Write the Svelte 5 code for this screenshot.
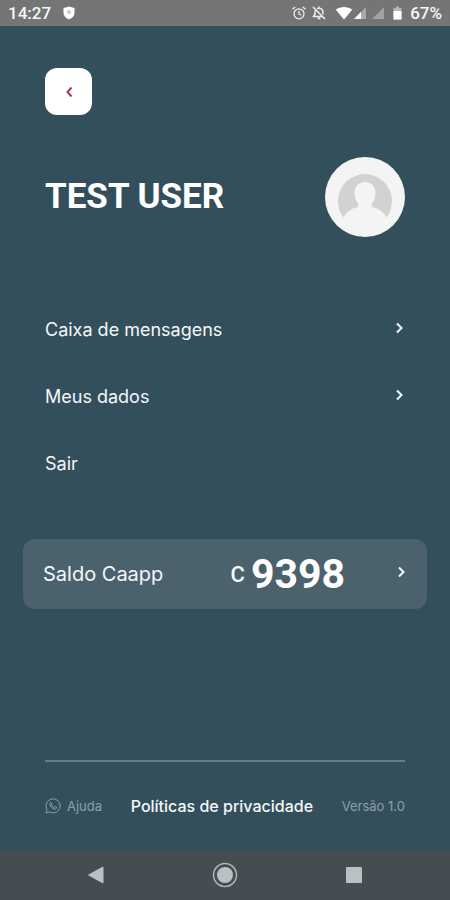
<script lang="ts">
  const menu = [
    { label: 'Caixa de mensagens', arrow: true },
    { label: 'Meus dados', arrow: true },
    { label: 'Sair', arrow: false }
  ];

  const user = 'TEST USER';
  const balance = 9398;
</script>

{#snippet chevron()}
  <svg class="chevron" viewBox="0 0 10 14" aria-hidden="true">
    <path d="M2 2.500 6.500 7 2 11.500" />
  </svg>
{/snippet}

<div class="screen">
  <div class="status-bar">
    <span>14:27</span>
    <svg class="shield" width="12" height="14" viewBox="0 0 12 14" aria-hidden="true">
      <path d="M6 .5 11.500 2v5c0 3-2.500 5.200-5.500 6.500C3 12.200.5 10 .5 7V2z" fill="#fff" />
      <path d="M6 3.500 8.300 5.500 7.500 8h-3L3.700 5.500z" fill="#d0d0d0" />
    </svg>
    <div class="status-icons">
      <svg width="16" height="16" viewBox="0 0 16 16" fill="none" stroke="#eee" stroke-width="1.300" aria-hidden="true">
        <circle cx="8" cy="8.800" r="5" />
        <path d="M8 5.800v3.200l2.200 1.300M1.500 4.300l2.700-2.400M14.500 4.300l-2.700-2.400" />
      </svg>
      <svg width="16" height="16" viewBox="0 0 16 16" fill="none" stroke="#eee" stroke-width="1.500" aria-hidden="true">
        <path d="M2 2l12 12M4.500 5.500C4 6.500 4 7.500 4 9L2.500 11.500h8.500M6 3.700c3-1.500 6 .3 6 3.800v2M8 1.500v1.500" />
        <path d="M6.700 13.300h2.600" stroke-width="2" />
      </svg>
      <svg class="wifi" width="18" height="14" viewBox="0 0 18 14" aria-hidden="true">
        <path d="M9 13.500.8 3.800C5.500.2 12.500.2 17.200 3.800z" fill="#fff" />
      </svg>
      <svg width="14" height="14" viewBox="0 0 14 14" aria-hidden="true">
        <path d="M13 1v12H1z" fill="#a9a9a9" />
        <path d="M8 6v7H1z" fill="#fff" />
      </svg>
      <svg width="14" height="14" viewBox="0 0 14 14" aria-hidden="true">
        <path d="M13 1v12H1z" fill="#a2a2a2" />
      </svg>
      <svg class="battery" width="9" height="14" viewBox="0 0 9 14" aria-hidden="true">
        <path d="M3 .5h3V2h2.500v11.500h-8V2H3z" fill="#b5b5b5" />
        <path d="M.5 5h8v8.500h-8z" fill="#fff" />
      </svg>
      <span>67%</span>
    </div>
  </div>

  <main>
    <button class="back" aria-label="Voltar">
      <svg width="10" height="14" viewBox="0 0 10 14" aria-hidden="true">
        <path d="M7.500 2.500 3.500 7l4 4.500" />
      </svg>
    </button>

    <header>
      <h1>{user}</h1>
      <svg class="avatar" viewBox="0 0 80 80" aria-hidden="true">
        <circle cx="40" cy="40" r="40" fill="#f4f4f4" />
        <path d="M19 61a27 27 0 1 1 42 0z" fill="#d2d2d2" />
        <path
          d="M40 25c6 0 10.500 4.500 10.500 11 0 4.500-1.500 8-3.500 10v4c7 1.500 13 5.500 15 12H18c2-6.500 8-10.500 15-12v-4c-2-2-3.500-5.500-3.500-10C29.500 29.500 34 25 40 25z"
          fill="#f4f4f4"
        />
      </svg>
    </header>

    <nav class="menu">
      {#each menu as item}
        <button class="menu-item">
          <span>{item.label}</span>
          {#if item.arrow}
            {@render chevron()}
          {/if}
        </button>
      {/each}
    </nav>

    <button class="balance">
      <span class="balance-label">Saldo Caapp</span>
      <span class="amount"><span class="currency">C</span><strong>{balance}</strong></span>
      {@render chevron()}
    </button>

    <footer>
      <a class="help" href="#ajuda">
        <svg width="16" height="16" viewBox="0 0 16 16" fill="none" stroke="currentColor" aria-hidden="true">
          <path d="M1 15l1-3.700A7 7 0 1 1 4.700 14z" />
          <path d="M5.700 4.300c-1 .6-1.200 1.900-.2 3.600 1.200 2 3.200 3.500 4.700 3.200.9-.2 1.500-.9 1.400-1.700L9.800 8.500l-.9 1C7.800 9 7 8.200 6.400 7.100l.8-.9z" />
        </svg>
        Ajuda
      </a>
      <a class="privacy" href="#privacidade">Políticas de privacidade</a>
      <span>Versão 1.0</span>
    </footer>
  </main>

  <div class="nav-bar">
    <button aria-label="Back">
      <svg width="26" height="26" viewBox="0 0 26 26" aria-hidden="true">
        <path d="M5.500 13 20 5v16z" fill="#bac1c3" stroke="#bac1c3" stroke-linejoin="round" />
      </svg>
    </button>
    <button aria-label="Home">
      <svg width="26" height="26" viewBox="0 0 26 26" aria-hidden="true">
        <circle cx="13" cy="13" r="11.500" fill="none" stroke="#aeb5b8" stroke-width="1.500" />
        <circle cx="13" cy="13" r="8" fill="#bac1c3" />
      </svg>
    </button>
    <button aria-label="Recents">
      <svg width="26" height="26" viewBox="0 0 26 26" aria-hidden="true">
        <rect x="5" y="5" width="16" height="16" rx="1" fill="#bac1c3" />
      </svg>
    </button>
  </div>
</div>

<style>
  :global(body) {
    margin: 0;
    background: #344f5c;
  }

  .screen {
    display: flex;
    flex-direction: column;
    min-height: 100vh;
    background: #344f5c;
    color: #f3f8fa;
    font-family: Inter, 'Liberation Sans', sans-serif;
  }

  svg {
    display: block;
    flex: none;
  }

  button {
    padding: 0;
    border: none;
    background: none;
    color: inherit;
    font: inherit;
    cursor: pointer;
  }

  a {
    color: inherit;
    text-decoration: none;
  }

  .status-bar {
    display: flex;
    align-items: center;
    height: 26px;
    padding: 0 8px;
    background: #757575;
    font: 500 17px/26px Roboto, sans-serif;
  }

  .shield {
    margin-left: 12px;
  }

  .status-icons {
    display: flex;
    align-items: center;
    margin-left: auto;
  }

  .status-icons svg + svg {
    margin-left: 4px;
  }

  .status-icons svg.wifi {
    margin-left: 8px;
  }

  .status-icons .wifi + svg {
    margin-left: 0;
  }

  .status-icons svg.battery {
    margin: 0 8px;
  }

  main {
    flex: 1;
    display: flex;
    flex-direction: column;
    padding: 42px 45px 34px;
  }

  .back {
    display: grid;
    place-items: center;
    width: 47px;
    height: 47px;
    border-radius: 12px;
    background: #fff;
  }

  .back path {
    fill: none;
    stroke: #9c4050;
    stroke-width: 2;
  }

  header {
    display: flex;
    align-items: center;
    justify-content: space-between;
    margin-top: 42px;
  }

  h1 {
    margin: 0;
    font: 700 35px/40px Roboto, sans-serif;
    color: #fff;
  }

  .avatar {
    width: 80px;
    height: 80px;
  }

  .menu {
    display: flex;
    flex-direction: column;
    margin-top: 59px;
  }

  .menu-item {
    display: flex;
    align-items: center;
    justify-content: space-between;
    height: 67px;
    font-size: 18px;
  }

  .chevron {
    width: 10px;
    height: 14px;
    margin-bottom: 4px;
  }

  .chevron path {
    fill: none;
    stroke: #f3f8fa;
    stroke-width: 2;
  }

  .balance {
    display: flex;
    align-items: center;
    height: 70px;
    margin: 42px -22px 0;
    padding: 0 20px;
    border-radius: 12px;
    background: #4b626d;
  }

  .balance-label {
    font-size: 20px;
  }

  .amount {
    display: flex;
    align-items: center;
    gap: 6px;
    margin: 0 52px 0 auto;
    font-family: Roboto, sans-serif;
  }

  .currency {
    font-size: 22px;
    font-weight: 500;
  }

  .amount strong {
    font-size: 41px;
    line-height: 48px;
    color: #fff;
  }

  footer {
    display: flex;
    align-items: center;
    justify-content: space-between;
    margin-top: auto;
    padding-top: 34px;
    border-top: 2px solid #5f7e8b;
    font-size: 13px;
    line-height: 20px;
    color: #8c9fa8;
  }

  .help {
    display: flex;
    align-items: center;
    gap: 6px;
  }

  .privacy {
    font-size: 16px;
    font-weight: 500;
    color: #f3f8fa;
  }

  .nav-bar {
    display: flex;
    align-items: center;
    justify-content: space-around;
    height: 50px;
    padding: 0 31px;
    background: #454c52;
  }
</style>
